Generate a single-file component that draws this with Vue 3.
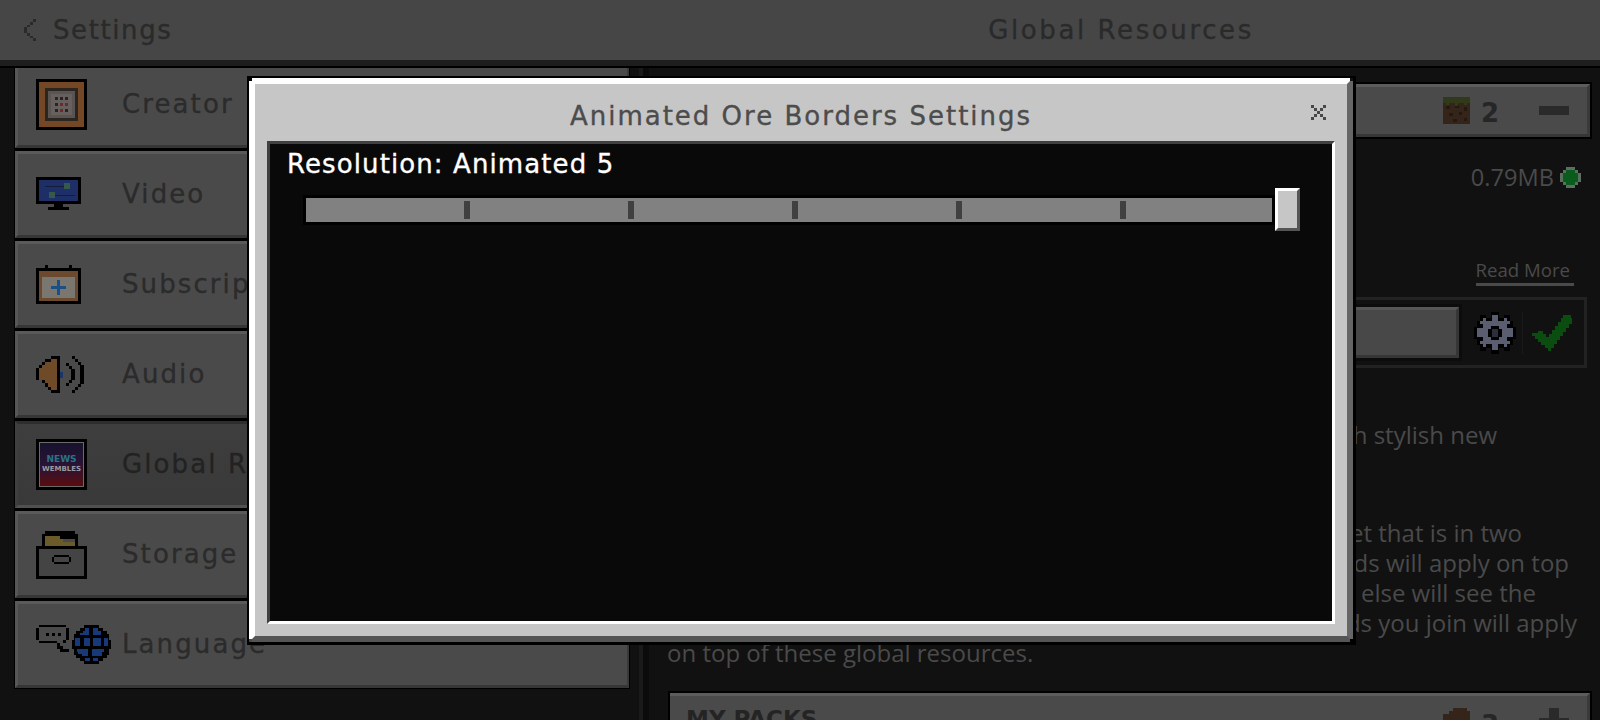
<script setup>
const buttons = [
  { id: 'creator', label: 'Creator' },
  { id: 'video', label: 'Video' },
  { id: 'sub', label: 'Subscriptions' },
  { id: 'audio', label: 'Audio' },
  { id: 'global', label: 'Global Resources', active: true },
  { id: 'storage', label: 'Storage' },
  { id: 'lang', label: 'Language' }
]
const paragraph = [
  { cls: 'l1', text: 'If a world has a resource pack set that is in two' },
  { cls: 'l2', text: 'places, the ones in your worlds will apply on top' },
  { cls: 'l3', text: 'of these, and everyone else will see the' },
  { cls: 'l4', text: 'same packs. Packs from worlds you join will apply' }
]
</script>

<template>
  <div class="page">
    <header class="topbar">
      <div class="back">
        <svg class="chev" width="13" height="22" viewBox="0 0 13 24" preserveAspectRatio="none" shape-rendering="crispEdges">
          <path fill="#2a2a2a" d="M9 0h3v3H9zM6 3h3v3H6zM3 6h3v3H3zM0 9h3v6H0zM3 15h3v3H3zM6 18h3v3H6zM9 21h3v3H9z"/>
        </svg>
        <span class="mc top-label">Settings</span>
      </div>
      <div class="mc top-title">Global Resources</div>
    </header>

    <main class="body">
      <nav class="side">
        <div class="list">
          <div v-for="b in buttons" :key="b.id" class="btn" :class="{ active: b.active }">
            <div class="icon-slot">
              <svg v-if="b.id === 'creator'" width="51" height="51" viewBox="0 0 51 51" shape-rendering="crispEdges">
                <rect width="51" height="51" fill="#000"/>
                <rect x="3" y="3" width="45" height="45" fill="#744826"/>
                <rect x="9" y="9" width="33" height="33" fill="#2b2520"/>
                <rect x="12" y="12" width="27" height="27" fill="#5a5553"/>
                <rect x="15" y="15" width="21" height="21" fill="#66615f"/>
                <path fill="#2a2226" d="M19 18h3v3h-3zM24 18h3v3h-3zM29 18h3v3h-3zM19 24h3v3h-3zM29 30h3v3h-3zM19 30h3v3h-3z"/>
                <path fill="#6d2a2a" d="M24 24h3v3h-3zM29 24h3v3h-3zM24 30h3v3h-3z"/>
              </svg>
              <svg v-else-if="b.id === 'video'" width="45" height="36" viewBox="0 0 45 36" shape-rendering="crispEdges">
                <rect width="45" height="27" fill="#000"/>
                <rect x="3" y="3" width="39" height="21" fill="#1d2f66"/>
                <rect x="18" y="27" width="9" height="3" fill="#000"/>
                <rect y="30" x="12" width="21" height="3" fill="#000"/>
                <path fill="#141c3c" d="M9 9h21v1H9zM15 18h24v1H15z"/>
                <rect x="28" y="6" width="6" height="6" fill="#35594a"/><rect x="13" y="15" width="6" height="6" fill="#35594a"/>
              </svg>
              <svg v-else-if="b.id === 'sub'" width="45" height="39" viewBox="0 0 45 39" shape-rendering="crispEdges">
                <rect y="3" width="45" height="36" fill="#000"/>
                <rect x="9" width="3" height="6" fill="#000"/><rect x="33" width="3" height="6" fill="#000"/>
                <rect x="3" y="6" width="39" height="30" fill="#6b4a30"/>
                <rect x="6" y="12" width="33" height="21" fill="#7a7770"/>
                <rect x="21" y="15" width="3" height="15" fill="#1d4f87"/><rect x="15" y="21" width="15" height="3" fill="#1d4f87"/>
              </svg>
              <svg v-else-if="b.id === 'audio'" width="49" height="37" viewBox="0 0 49 37" shape-rendering="crispEdges">
                <path fill="#000" d="M15 0h9v37h-9v-3h-3v-3H9v-4H6v-3H0V12h3V9h3V6h3V3h6z"/>
                <path fill="#6e4a28" d="M15 3h6v31h-6v-3h-3v-4H9v-3H3V12h3V9h3V6h6z"/>
                <rect x="24" y="16" width="3" height="6" fill="#17366b"/>
                <path fill="#000" d="M30 7h3v3h3v3h3v11h-3v3h-3v3h-3v-3h3v-3h2V13h-2v-3h-3zM36 0h3v3h3v3h3v3h3v19h-3v3h-3v3h-3v3h-3v-3h3v-3h3v-3h2V9h-2V6h-3V3h-3z"/>
              </svg>
              <svg v-else-if="b.id === 'global'" width="51" height="51" viewBox="0 0 51 51">
                <defs>
                  <linearGradient id="gr" x1="0" y1="0" x2="0" y2="1">
                    <stop offset="0" stop-color="#17122e"/><stop offset=".55" stop-color="#2a1436"/><stop offset="1" stop-color="#5a0c0c"/>
                  </linearGradient>
                </defs>
                <rect width="51" height="51" fill="#000"/>
                <rect x="3" y="3" width="45" height="45" fill="#6a6a6a"/>
                <rect x="4" y="4" width="43" height="43" fill="url(#gr)"/>
                <text class="tiny teal" x="25.5" y="23" text-anchor="middle">NEWS</text>
                <text class="tiny pale" x="25.5" y="32" text-anchor="middle">WEMBLES</text>
              </svg>
              <svg v-else-if="b.id === 'storage'" width="51" height="48" viewBox="0 0 51 48" shape-rendering="crispEdges">
                <path fill="#000" d="M9 0h30v3h3v15H6V3h3z"/>
                <rect x="9" y="5" width="30" height="12" fill="#6b5a2a"/>
                <rect x="24" y="5" width="15" height="3" fill="#000"/><rect x="27" y="8" width="12" height="3" fill="#4a4a4a"/>
                <rect y="15" width="51" height="33" fill="#000"/>
                <rect x="3" y="18" width="45" height="27" fill="#444"/>
                <path fill="#000" d="M18 24h15v2H18zM18 31h15v2H18zM16 26h2v5h-2zM33 26h2v5h-2z"/>
              </svg>
              <svg v-else width="75" height="39" viewBox="0 0 75 39" shape-rendering="crispEdges">
                <path fill="#000" d="M3 0h27v2H3zM0 3h3v12H0zM30 3h3v12h-3zM3 16h18v2H3zM21 18h3v3h3v3h6v3h-9v-3h-3zM27 15h3v3h-3z"/>
                <path fill="#000" d="M10 8h3v3h-3zM16 8h3v3h-3zM22 8h3v3h-3z"/>
                <path fill="#000" d="M48 0h15v3h4v3h4v3h2v6h2v9h-2v6h-2v3h-4v3h-4v3H48v-3h-4v-3h-4v-3h-2v-6h-2v-9h2V9h2V6h4V3h4z"/>
                <path fill="#17397a" d="M49 3h4v7h-9V8h3V6h2zM57 3h5v3h3v4h-8zM39 13h5v8h-5zM48 13h6v8h-6zM57 13h8v8h-8zM68 13h4v8h-4zM41 24h11v7h-6v-2h-4zM56 24h12v3h-2v4H56z"/>
                <path fill="#17397a" d="M49 33h5v3h-5zM57 33h5v3h-5z"/>
              </svg>
            </div>
            <span class="mc btn-label">{{ b.label }}</span>
          </div>
        </div>
      </nav>

      <div class="divider"></div>

      <section class="detail">
        <div class="pack-row">
          <svg width="27" height="27" viewBox="0 0 27 27" shape-rendering="crispEdges">
            <rect width="27" height="27" fill="#35241a"/>
            <rect width="27" height="6" fill="#303a1a"/>
            <path fill="#24180f" d="M3 9h4v3H3zM12 8h4v3h-4zM21 10h3v4h-3zM6 16h4v3H6zM16 15h3v3h-3zM10 22h4v3h-4zM21 21h3v3h-3z"/>
            <path fill="#303a1a" d="M3 6h3v2H3zM12 6h3v3h-3zM21 6h3v2h-3z"/>
          </svg>
          <span class="count">2</span>
          <span class="minus"></span>
        </div>

        <div class="size-row">
          <span class="sans size">0.79MB</span>
          <svg width="21" height="21" viewBox="0 0 21 21" shape-rendering="crispEdges">
            <path fill="#5c6e5f" d="M6 0h9v3h3v3h3v9h-3v3h-3v3H6v-3H3v-3H0V6h3V3h3z"/>
            <path fill="#0a5c1d" d="M6 3h9v3h3v9h-3v3H6v-3H3V6h3z"/>
          </svg>
        </div>

        <div class="sans read-more">Read More</div>

        <div class="action-row">
          <div class="action-btn"></div>
          <div class="gear-cell">
            <svg width="42" height="42" viewBox="0 0 42 42" shape-rendering="crispEdges">
              <path fill="#000" d="M17 0h8v6h5V3h6v6h3v6h3v12h-3v6h-3v6h-6v-3h-5v6h-8v-6h-5v3H6v-6H3v-6H0V15h3V9h3V3h6v3h5z"/>
              <path fill="#5b5e71" d="M18 3h6v6h6V6h3v3h3v3h-3v4h6v9h-6v4h3v3h-3v3h-3v-3h-6v6h-6v-6h-6v3H9v-3H6v-3h3v-4H3v-9h6v-4H6V9h3V6h3v3h6z"/>
              <path fill="#000" d="M17 14h8v3h3v8h-3v3h-8v-3h-3v-8h3z"/>
              <path fill="#2c2e3c" d="M18 17h6v8h-6z"/>
            </svg>
          </div>
          <div class="check-cell">
            <svg width="40" height="36" viewBox="0 0 40 36" shape-rendering="crispEdges">
              <path fill="#0b4c10" d="M31 0h8v3h1v6h-3v4h-3v4h-3v4h-3v4h-3v4h-3v4h-3v3h-3v-3h-3v-3H9v-3H6v-3H3v-3H0v-3h6v-2h5v3h3v3h3v-3h3v-4h3v-4h3V7h3V3h2z"/>
            </svg>
          </div>
        </div>

        <div class="sans line first">Enhance the look of your ores with stylish new</div>

        <div class="paragraph sans">
          <div v-for="l in paragraph" :key="l.cls" class="line" :class="l.cls">{{ l.text }}</div>
          <div class="line last">on top of these global resources.</div>
        </div>

        <div class="pack-row mine">
          <span class="mine-title">MY PACKS</span>
          <svg width="27" height="27" viewBox="0 0 27 27" shape-rendering="crispEdges">
            <path fill="#35241a" d="M10 0h14v3h3v24H0V6h6V3h4z"/>
          </svg>
          <span class="count">3</span>
          <span class="plus"></span>
        </div>
      </section>
    </main>

    <div class="modal">
      <div class="face">
        <div class="modal-head">
          <span class="mc modal-title">Animated Ore Borders Settings</span>
          <svg class="close" width="15" height="15" viewBox="0 0 15 15" shape-rendering="crispEdges">
            <path fill="#484848" d="M0 0h3v3H0zM12 0h3v3h-3zM3 3h3v3H3zM9 3h3v3H9zM6 6h3v3H6zM3 9h3v3H3zM9 9h3v3H9zM0 12h3v3H0zM12 12h3v3h-3z"/>
          </svg>
        </div>
        <div class="panel">
          <div class="mc res-label">Resolution: Animated 5</div>
          <div class="slider">
            <div class="track">
              <i v-for="n in 5" :key="n" class="tick"></i>
            </div>
            <div class="thumb"></div>
          </div>
        </div>
      </div>
      <i class="notch tl"></i><i class="notch tr"></i><i class="notch bl"></i><i class="notch br"></i>
    </div>
  </div>
</template>

<style scoped>
.page {
  position: relative;
  width: 1600px;
  height: 720px;
  overflow: hidden;
  background: #111;
  display: flex;
  flex-direction: column;
}
.mc {
  font-family: "DejaVu Sans", sans-serif;
  font-size: 26px;
  -webkit-text-stroke: 0.35px currentColor;
  white-space: nowrap;
}
.sans {
  font-family: "Open Sans", sans-serif;
  color: #4a4a4a;
  white-space: nowrap;
}
.tiny {
  font-family: "DejaVu Sans", sans-serif;
  font-weight: 700;
}
.teal { font-size: 9px; fill: #2d7286; }
.pale { font-size: 7px; fill: #9a9aa0; }
.topbar {
  flex: none;
  height: 60px;
  background: #464646;
  border-bottom: 6px solid #1e1e1e;
  box-shadow: 0 2px 0 #000;
  display: flex;
  align-items: center;
  color: #2a2a2a;
  position: relative;
  z-index: 2;
}
.back {
  width: 649px;
  padding-left: 24px;
  box-sizing: border-box;
  display: flex;
  align-items: center;
  gap: 16px;
}
.top-label { letter-spacing: 1.6px; }
.top-title {
  flex: 1;
  text-align: center;
  letter-spacing: 2.6px;
  padding-right: 7px;
}
.body {
  flex: 1;
  min-height: 0;
  display: flex;
  padding-top: 2px;
}
.side {
  width: 639px;
  flex: none;
  padding-left: 14px;
  box-sizing: border-box;
  overflow: hidden;
}
.list {
  width: 616px;
  margin-top: -7px;
  display: flex;
  flex-direction: column;
  gap: 3px;
  background: #000;
  padding: 0 1px 1px;
  box-sizing: border-box;
}
.btn {
  height: 87px;
  background: #4a4a4a;
  border-top: 3px solid #5a5a5a;
  border-left: 3px solid #575757;
  border-right: 2px solid #3a3a3a;
  border-bottom: 3px solid #363636;
  box-sizing: border-box;
  display: flex;
  align-items: center;
  color: #2b2b2b;
}
.btn.active {
  background: linear-gradient(#3e3e3e, #393939);
  border-top-color: #2e2e2e;
  border-left-color: #3f3f3f;
  border-bottom-color: #515151;
  color: #222;
}
.icon-slot {
  width: 104px;
  flex: none;
  padding-left: 18px;
  box-sizing: border-box;
  display: flex;
  align-items: center;
}
.btn-label { letter-spacing: 2.1px; position: relative; top: -1px; }
.divider {
  width: 10px;
  flex: none;
  background: linear-gradient(90deg, #1a1a1a 0 4px, #0b0b0b 4px);
}
.detail {
  flex: 1;
  min-width: 0;
  padding: 16px 10px 0 21px;
  display: flex;
  flex-direction: column;
}
.pack-row {
  flex: none;
  height: 53px;
  background: #4a4a4a;
  border-top: 3px solid #5c5c5c;
  border-right: 3px solid #3a3a3a;
  border-bottom: 3px solid #363636;
  box-shadow: 0 0 0 2px #000;
  box-sizing: border-box;
  display: flex;
  align-items: center;
  justify-content: flex-end;
  padding-right: 18px;
}
.count {
  font-family: "DejaVu Sans", sans-serif;
  font-weight: 700;
  font-size: 26px;
  color: #262626;
  margin-left: 11px;
  width: 58px;
  position: relative;
  top: 2px;
}
.minus {
  width: 30px;
  height: 9px;
  background: #2a2a2a;
}
.plus {
  width: 30px;
  height: 30px;
  background:
    linear-gradient(#2a2a2a, #2a2a2a) center / 10px 30px no-repeat,
    linear-gradient(#2a2a2a, #2a2a2a) center / 30px 10px no-repeat;
}
.size-row {
  margin-top: 24px;
  display: flex;
  justify-content: flex-end;
  align-items: center;
  gap: 6px;
  padding-right: 9px;
}
.size { font-size: 23.6px; line-height: 32px; }
.read-more {
  margin-top: 64px;
  align-self: flex-end;
  margin-right: 16px;
  font-size: 18.6px;
  line-height: 26px;
  color: #4a4a4a;
  border-bottom: 3px solid #4a4a4a;
  padding-right: 4px;
}
.action-row {
  margin-top: 11px;
  height: 71px;
  width: calc(100% - 3px);
  border: 3px solid #222;
  box-sizing: border-box;
  display: flex;
  align-items: center;
  flex: none;
}
.action-btn {
  width: 786px;
  height: 51px;
  flex: none;
  background: #484848;
  border-top: 3px solid #565656;
  border-bottom: 3px solid #363636;
  border-right: 3px solid #363636;
  box-shadow: 0 0 0 3px #0c0c0c;
  box-sizing: border-box;
}
.gear-cell {
  width: 64px;
  padding-left: 15px;
  box-sizing: border-box;
  display: flex;
  border-right: 1px solid #1a1a1a;
}
.check-cell {
  flex: 1;
  padding-left: 9px;
  display: flex;
}
.line {
  font-size: 24px;
  line-height: 30px;
  text-align: right;
}
.line.first {
  margin-top: 52px;
  padding-right: 93px;
}
.paragraph {
  margin-top: 68px;
}
.l1 { padding-right: 68px; }
.l2 { padding-right: 21px; }
.l3 { padding-right: 54px; }
.l4 { padding-right: 13px; }
.line.last { text-align: left; margin-left: -3px; }
.mine {
  margin-top: 25px;
  height: 87px;
  align-items: flex-start;
  padding-top: 12px;
  position: relative;
}
.mine-title {
  position: absolute;
  left: 16px;
  top: 10px;
  font-family: "DejaVu Sans", sans-serif;
  font-weight: 700;
  font-size: 23px;
  color: #242424;
}

.modal {
  position: absolute;
  left: 247px;
  top: 76px;
  width: 1109px;
  height: 569px;
  padding: 2px 3px 3px 2px;
  box-sizing: border-box;
  background: #000;
  z-index: 5;
}
.face {
  height: 100%;
  box-sizing: border-box;
  background: #c6c6c6;
  border-style: solid;
  border-width: 6px;
  border-color: #fff #666 #555 #fff;
  display: flex;
  flex-direction: column;
}
.modal-head {
  flex: none;
  height: 57px;
  box-sizing: border-box;
  padding-top: 7px;
  position: relative;
  display: flex;
  align-items: center;
  justify-content: center;
}
.modal-title {
  letter-spacing: 2px;
  color: #4c4c4c;
}
.close {
  position: absolute;
  right: 21px;
  top: 21px;
}
.panel {
  flex: 1;
  min-height: 0;
  margin: 0 12px 12px;
  background: #090909;
  border-style: solid;
  border-width: 3px;
  border-color: #404040 #fff #fff #404040;
  display: flex;
  flex-direction: column;
  box-sizing: border-box;
}
.res-label {
  margin: 5px 0 0 17px;
  line-height: 30px;
  letter-spacing: 1.1px;
  color: #fff;
}
.slider {
  position: relative;
  margin: 19px 0 0 36px;
  width: 966px;
}
.track {
  height: 24px;
  background: #818181;
  box-shadow: 0 0 0 3px #000;
  display: flex;
  align-items: center;
  padding-left: 158px;
  gap: 158px;
}
.tick {
  display: block;
  width: 6px;
  height: 18px;
  background: #404040;
}
.thumb {
  position: absolute;
  left: 969px;
  top: -10px;
  width: 25px;
  height: 43px;
  box-sizing: border-box;
  background: #c6c6c6;
  border-style: solid;
  border-width: 3px;
  border-color: #fff #555 #555 #fff;
}
.notch {
  position: absolute;
  width: 3px;
  height: 3px;
  background: #000;
}
.tl { left: 2px; top: 2px; }
.tr { right: 3px; top: 2px; background: #111; }
.bl { left: 2px; bottom: 3px; background: #4a4a4a; }
.br { right: 3px; bottom: 3px; background: #000; }
</style>
